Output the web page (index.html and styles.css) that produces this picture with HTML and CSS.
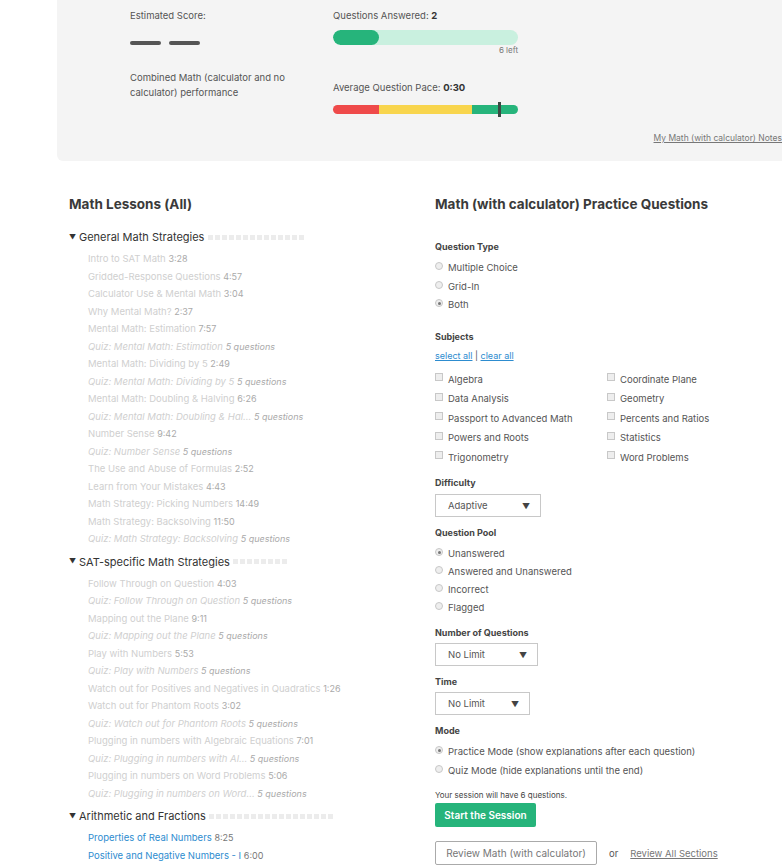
FILE: index.html
```html
<!DOCTYPE html>
<html lang="en">
<head>
    <meta charset="UTF-8">
    <meta name="viewport" content="width=device-width, initial-scale=1.0">
    <title>Math (with calculator) Practice</title>
    <link rel="stylesheet" href="styles.css">
</head>
<body>
    <div class="summary">
        <div class="summary-row">
            <div class="score-col">
                <div class="label">Estimated Score:</div>
                <div class="score-dashes"><span></span><span></span></div>
                <p class="score-desc">Combined Math (calculator and no calculator) performance</p>
            </div>
            <div class="progress-col">
                <div class="label">Questions Answered: <strong>2</strong></div>
                <div class="answered-bar"><div class="answered-fill" style="width: 25%"></div></div>
                <div class="left-count">6 left</div>
                <div class="label pace-label">Average Question Pace: <strong>0:30</strong></div>
                <div class="pace-bar">
                    <span class="pace-red"></span>
                    <span class="pace-yellow"></span>
                    <span class="pace-green"></span>
                    <span class="pace-marker" style="left: 89%"></span>
                </div>
            </div>
        </div>
        <div class="notes-row"><a href="#" class="notes-link">My Math (with calculator) Notes</a></div>
    </div>

    <div class="main">
        <!-- lessons -->
        <div class="lessons">
            <h2>Math Lessons (All)</h2>

            <div class="section">
                <div class="section-title"><span class="caret">&#9660;</span>General Math Strategies <span class="dots" data-n="14"></span></div>
                <ul>
                    <li>Intro to SAT Math <span class="dur">3:28</span></li>
                    <li>Gridded-Response Questions <span class="dur">4:57</span></li>
                    <li>Calculator Use &amp; Mental Math <span class="dur">3:04</span></li>
                    <li>Why Mental Math? <span class="dur">2:37</span></li>
                    <li>Mental Math: Estimation <span class="dur">7:57</span></li>
                    <li class="quiz">Quiz: Mental Math: Estimation <span class="dur">5 questions</span></li>
                    <li>Mental Math: Dividing by 5 <span class="dur">2:49</span></li>
                    <li class="quiz">Quiz: Mental Math: Dividing by 5 <span class="dur">5 questions</span></li>
                    <li>Mental Math: Doubling &amp; Halving <span class="dur">6:26</span></li>
                    <li class="quiz">Quiz: Mental Math: Doubling &amp; Hal... <span class="dur">5 questions</span></li>
                    <li>Number Sense <span class="dur">9:42</span></li>
                    <li class="quiz">Quiz: Number Sense <span class="dur">5 questions</span></li>
                    <li>The Use and Abuse of Formulas <span class="dur">2:52</span></li>
                    <li>Learn from Your Mistakes <span class="dur">4:43</span></li>
                    <li>Math Strategy: Picking Numbers <span class="dur">14:49</span></li>
                    <li>Math Strategy: Backsolving <span class="dur">11:50</span></li>
                    <li class="quiz">Quiz: Math Strategy: Backsolving <span class="dur">5 questions</span></li>
                </ul>
            </div>

            <div class="section">
                <div class="section-title"><span class="caret">&#9660;</span>SAT-specific Math Strategies <span class="dots" data-n="8"></span></div>
                <ul>
                    <li>Follow Through on Question <span class="dur">4:03</span></li>
                    <li class="quiz">Quiz: Follow Through on Question <span class="dur">5 questions</span></li>
                    <li>Mapping out the Plane <span class="dur">9:11</span></li>
                    <li class="quiz">Quiz: Mapping out the Plane <span class="dur">5 questions</span></li>
                    <li>Play with Numbers <span class="dur">5:53</span></li>
                    <li class="quiz">Quiz: Play with Numbers <span class="dur">5 questions</span></li>
                    <li>Watch out for Positives and Negatives in Quadratics <span class="dur">1:26</span></li>
                    <li>Watch out for Phantom Roots <span class="dur">3:02</span></li>
                    <li class="quiz">Quiz: Watch out for Phantom Roots <span class="dur">5 questions</span></li>
                    <li>Plugging in numbers with Algebraic Equations <span class="dur">7:01</span></li>
                    <li class="quiz">Quiz: Plugging in numbers with Al... <span class="dur">5 questions</span></li>
                    <li>Plugging in numbers on Word Problems <span class="dur">5:06</span></li>
                    <li class="quiz">Quiz: Plugging in numbers on Word... <span class="dur">5 questions</span></li>
                </ul>
            </div>

            <div class="section">
                <div class="section-title"><span class="caret">&#9660;</span>Arithmetic and Fractions <span class="dots" data-n="18"></span></div>
                <ul>
                    <li class="open"><a href="#">Properties of Real Numbers</a> <span class="dur">8:25</span></li>
                    <li class="open"><a href="#">Positive and Negative Numbers - I</a> <span class="dur">6:00</span></li>
                </ul>
            </div>
        </div>

        <!-- practice form -->
        <div class="practice">
            <h2>Math (with calculator) Practice Questions</h2>

            <div class="field-label first">Question Type</div>
            <div class="option"><span class="radio"></span>Multiple Choice</div>
            <div class="option"><span class="radio"></span>Grid-In</div>
            <div class="option"><span class="radio checked"></span>Both</div>

            <div class="field-label subjects">Subjects</div>
            <div class="select-links"><a href="#">select all</a> | <a href="#">clear all</a></div>
            <div class="subject-grid">
                <div class="option"><span class="check"></span>Algebra</div>
                <div class="option"><span class="check"></span>Coordinate Plane</div>
                <div class="option"><span class="check"></span>Data Analysis</div>
                <div class="option"><span class="check"></span>Geometry</div>
                <div class="option"><span class="check"></span>Passport to Advanced Math</div>
                <div class="option"><span class="check"></span>Percents and Ratios</div>
                <div class="option"><span class="check"></span>Powers and Roots</div>
                <div class="option"><span class="check"></span>Statistics</div>
                <div class="option"><span class="check"></span>Trigonometry</div>
                <div class="option"><span class="check"></span>Word Problems</div>
            </div>

            <div class="field-label">Difficulty</div>
            <div class="select select-difficulty">Adaptive<span class="arrow">&#9660;</span></div>

            <div class="field-label">Question Pool</div>
            <div class="option pool"><span class="radio checked"></span>Unanswered</div>
            <div class="option pool"><span class="radio"></span>Answered and Unanswered</div>
            <div class="option pool"><span class="radio"></span>Incorrect</div>
            <div class="option pool"><span class="radio"></span>Flagged</div>

            <div class="field-label">Number of Questions</div>
            <div class="select select-number">No Limit<span class="arrow">&#9660;</span></div>

            <div class="field-label">Time</div>
            <div class="select select-time">No Limit<span class="arrow">&#9660;</span></div>

            <div class="field-label">Mode</div>
            <div class="option"><span class="radio checked"></span>Practice Mode (show explanations after each question)</div>
            <div class="option"><span class="radio"></span>Quiz Mode (hide explanations until the end)</div>

            <p class="session-note">Your session will have 6 questions.</p>
            <button class="start-button">Start the Session</button>

            <div class="review-row">
                <button class="review-button">Review Math (with calculator)</button>
                <span class="or">or</span>
                <a href="#" class="review-all">Review All Sections</a>
            </div>
        </div>
    </div>

    <script>
        // progress squares next to each section title
        document.querySelectorAll('.dots').forEach(function(el) {
            var n = parseInt(el.getAttribute('data-n'), 10);
            for (var i = 0; i < n; i++) {
                el.appendChild(document.createElement('i'));
            }
        });
    </script>
</body>
</html>
```

FILE: styles.css
```css
body {
    margin: 0;
    font-family: 'Inter', 'Liberation Sans', sans-serif;
    color: #555;
    background: #fff;
    overflow: hidden;
}
a {
    color: #2d8ccf;
}

/* summary panel */
.summary {
    margin-left: 57px;
    background-color: #f4f4f4;
    border-bottom-left-radius: 6px;
    padding: 8px 0 17px 73px;
}
.summary-row {
    display: flex;
}
.label {
    font-size: 9.5px;
    line-height: 15px;
    color: #555;
}
.label strong {
    color: #333;
}
.score-col {
    width: 203px;
}
.score-dashes {
    display: flex;
    gap: 8px;
    margin-top: 18px;
}
.score-dashes span {
    width: 31px;
    height: 4px;
    border-radius: 2px;
    background-color: #555;
}
.score-desc {
    margin: 25px 0 0;
    width: 170px;
    font-size: 9.5px;
    line-height: 15px;
}
.progress-col {
    width: 185px;
}
.answered-bar {
    margin-top: 7px;
    height: 15px;
    border-radius: 8px;
    background-color: #c9f0df;
    overflow: hidden;
}
.answered-fill {
    height: 100%;
    border-radius: 8px;
    background-color: #26b47b;
}
.left-count {
    text-align: right;
    font-size: 8px;
    line-height: 11px;
    color: #777;
}
.pace-label {
    margin-top: 24px;
}
.pace-bar {
    position: relative;
    display: flex;
    margin-top: 10px;
    height: 9px;
}
.pace-red {
    width: 46px;
    background-color: #ef4a4a;
    border-radius: 5px 0 0 5px;
}
.pace-yellow {
    width: 93px;
    background-color: #f8d54d;
}
.pace-green {
    flex: 1;
    background-color: #26b47b;
    border-radius: 0 5px 5px 0;
}
.pace-marker {
    position: absolute;
    top: -3px;
    width: 3px;
    height: 15px;
    background-color: #3d4a44;
}
.notes-row {
    margin-top: 15px;
    text-align: right;
    line-height: 12px;
}
.notes-link {
    font-size: 8.5px;
    color: #777;
}

/* main columns */
.main {
    display: flex;
    padding-left: 69px;
    margin-top: 34px;
}
h2 {
    margin: 0;
    font-size: 13.5px;
    line-height: 18px;
    font-weight: 700;
    color: #3a3a3a;
}
.lessons {
    width: 366px;
}
.section {
    margin-top: 6px;
}
.lessons h2 + .section {
    margin-top: 16px;
}
.section-title {
    display: flex;
    align-items: center;
    height: 16px;
    font-size: 11px;
    color: #333;
    white-space: pre;
}
.caret {
    width: 10px;
    font-size: 7px;
}
.dots {
    display: flex;
    gap: 2px;
}
.dots i {
    width: 5px;
    height: 5px;
    background-color: #ececec;
}
.section ul {
    list-style: none;
    margin: 0;
    padding: 5px 0 0 19px;
}
.section li {
    font-size: 9.5px;
    line-height: 17.5px;
    color: #cfcfcf;
    white-space: nowrap;
}
.section li.quiz {
    font-style: italic;
}
.dur {
    color: #aaa;
    font-size: 9px;
}
.section li.open a {
    text-decoration: none;
    color: #2d8ccf;
}
.section li.open .dur {
    color: #777;
}

/* practice form */
.practice {
    flex: 1;
}
.field-label {
    margin-top: 9px;
    font-size: 9px;
    line-height: 14px;
    font-weight: 700;
    color: #444;
}
.field-label.first {
    margin-top: 27px;
}
.field-label.subjects {
    margin-top: 15px;
}
.option {
    display: flex;
    align-items: center;
    font-size: 9.5px;
    line-height: 18.5px;
    color: #555;
}
.field-label + .option {
    margin-top: 5px;
}
.option.pool {
    line-height: 18px;
}
.radio, .check {
    width: 6px;
    height: 6px;
    margin-right: 5px;
    border: 1px solid #c8c8c8;
    background-color: #eeeeee;
    position: relative;
    top: -2px;
}
.radio {
    border-radius: 50%;
}
.radio.checked::after {
    content: "";
    position: absolute;
    left: 1.5px;
    top: 1.5px;
    width: 3px;
    height: 3px;
    border-radius: 50%;
    background-color: #777;
}
.select-links {
    margin-top: 6px;
    font-size: 9px;
    line-height: 12px;
    color: #555;
}
.subject-grid {
    display: grid;
    grid-template-columns: 172px 1fr;
    margin-top: 8px;
}
.subject-grid .option {
    line-height: 19.5px;
}
.select {
    display: flex;
    justify-content: space-between;
    align-items: center;
    box-sizing: border-box;
    height: 23px;
    margin-top: 3px;
    padding: 0 10px 0 12px;
    border: 1px solid #c8c8c8;
    font-size: 9.5px;
    color: #555;
    background: #fff;
}
.select .arrow {
    font-size: 8px;
    color: #444;
}
.select-difficulty {
    width: 106px;
    margin-top: 4px;
}
.select-number {
    width: 103px;
}
.select-time {
    width: 95px;
}
.session-note {
    margin: 10px 0 0;
    font-size: 8px;
    line-height: 11px;
    color: #444;
}
.start-button {
    display: block;
    margin-top: 2px;
    width: 101px;
    height: 24px;
    border: none;
    border-radius: 2px;
    background-color: #26b47b;
    color: #fff;
    font-family: inherit;
    font-size: 10px;
    font-weight: 600;
}
.review-row {
    display: flex;
    align-items: center;
    margin-top: 14px;
}
.review-button {
    width: 162px;
    height: 24px;
    border: 1px solid #aaa;
    border-radius: 2px;
    background: #fff;
    color: #777;
    font-family: inherit;
    font-size: 10px;
}
.or {
    margin-left: 12px;
    font-size: 9.5px;
    color: #555;
}
.review-all {
    margin-left: 12px;
    font-size: 9.5px;
    color: #777;
}
```
